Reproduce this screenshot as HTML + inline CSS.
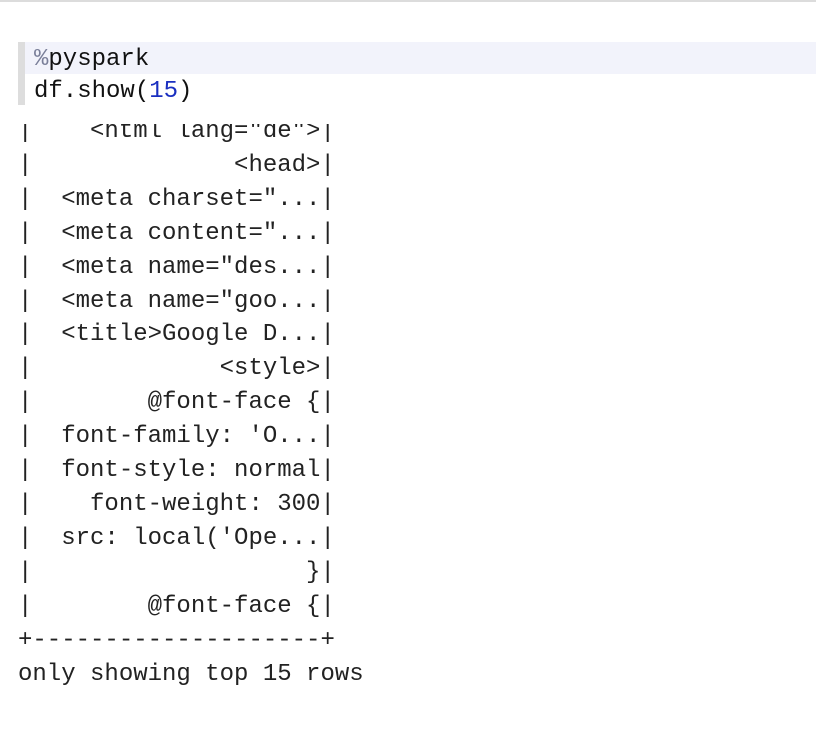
<!DOCTYPE html>
<html><head><style>
body{margin:0;width:816px;height:754px;background:#fff;overflow:hidden;position:relative;font-family:"Liberation Mono",monospace;font-size:24px;color:#222}
.top{position:absolute;left:0;top:0;width:816px;height:2px;background:#dcdcdc}
.bar{position:absolute;left:18px;top:42px;width:7px;height:63px;background:#ddd}
.hl{position:absolute;left:25px;top:42px;width:791px;height:32px;background:#f2f3fb}
.code{position:absolute;left:34px;top:44px;line-height:32px;white-space:pre;color:#111}
.out{position:absolute;left:18px;top:124px;width:798px;height:600px;overflow:hidden}
.out pre{margin:-9px 0 0 0;font:inherit;line-height:33.9px;color:#222}
</style></head><body>
<div class="top"></div>
<div class="bar"></div><div class="hl"></div>
<div class="code"><span style="color:#7a7f99">%</span>pyspark
df.show(<span style="color:#1a2fc0">15</span>)</div>
<div class="out"><pre>|    &lt;html lang="de"&gt;|
|              &lt;head&gt;|
|  &lt;meta charset="...|
|  &lt;meta content="...|
|  &lt;meta name="des...|
|  &lt;meta name="goo...|
|  &lt;title&gt;Google D...|
|             &lt;style&gt;|
|        @font-face {|
|  font-family: 'O...|
|  font-style: normal|
|    font-weight: 300|
|  src: local('Ope...|
|                   }|
|        @font-face {|
+--------------------+
only showing top 15 rows</pre></div>
</body></html>
